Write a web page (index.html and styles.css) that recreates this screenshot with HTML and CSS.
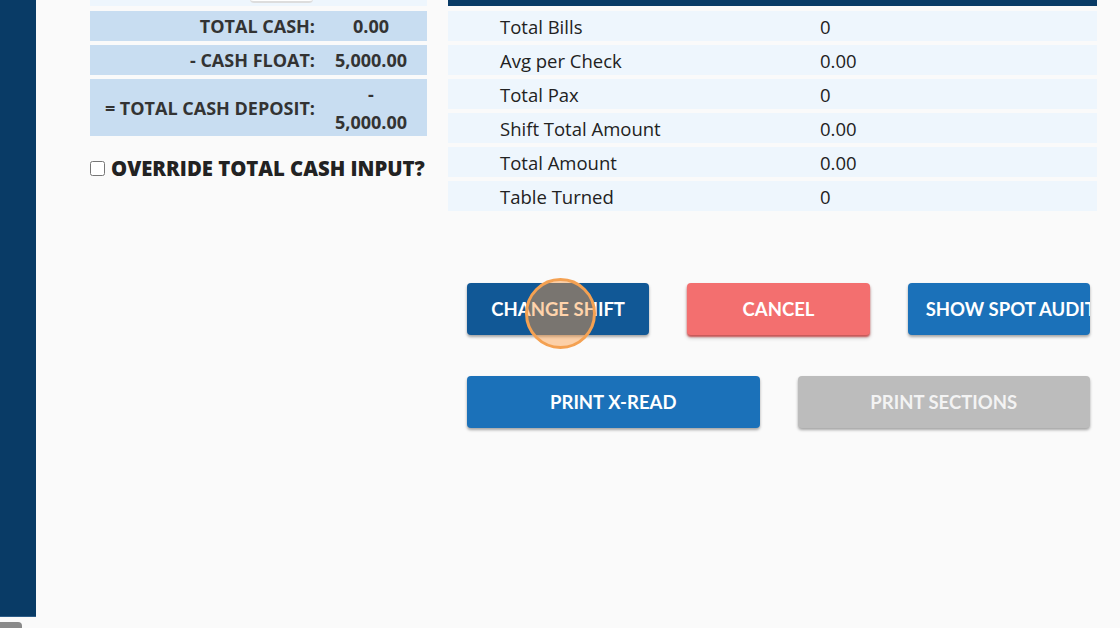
FILE: index.html
```
<!DOCTYPE html>
<html lang="en">
<head>
    <meta charset="UTF-8">
    <title>End Shift</title>
    <link rel="stylesheet" href="styles.css">
</head>
<body>
    <div class="app">
        <div class="sidebar"></div>

        <div class="main">
            <div class="cash-col">
                <div class="cash-row cash-row-input">
                    <span class="cash-input"></span>
                </div>
                <div class="cash-row">
                    <span class="cash-label">TOTAL CASH:</span>
                    <span class="cash-value">0.00</span>
                </div>
                <div class="cash-row">
                    <span class="cash-label">- CASH FLOAT:</span>
                    <span class="cash-value">5,000.00</span>
                </div>
                <div class="cash-row cash-row-tall">
                    <span class="cash-label">= TOTAL CASH DEPOSIT:</span>
                    <span class="cash-value">-<br>5,000.00</span>
                </div>

                <label class="override">
                    <input type="checkbox">
                    <span>OVERRIDE TOTAL CASH INPUT?</span>
                </label>
            </div>

            <div class="summary-col">
                <div class="summary-head"></div>
                <div class="summary-row"><span>Total Bills</span><span>0</span></div>
                <div class="summary-row"><span>Avg per Check</span><span>0.00</span></div>
                <div class="summary-row"><span>Total Pax</span><span>0</span></div>
                <div class="summary-row"><span>Shift Total Amount</span><span>0.00</span></div>
                <div class="summary-row"><span>Total Amount</span><span>0.00</span></div>
                <div class="summary-row"><span>Table Turned</span><span>0</span></div>

                <div class="actions">
                    <div class="btn-row">
                        <button class="btn btn-dark">CHANGE SHIFT<span class="tap"></span></button>
                        <button class="btn btn-red">CANCEL</button>
                        <button class="btn btn-blue btn-clip">SHOW SPOT AUDIT</button>
                    </div>
                    <div class="btn-row">
                        <button class="btn btn-blue">PRINT X-READ</button>
                        <button class="btn btn-grey">PRINT SECTIONS</button>
                    </div>
                </div>
            </div>
        </div>
    </div>
    <div class="bottom-strip"><span class="pill"></span></div>
</body>
</html>
```

FILE: styles.css
```
body {
    margin: 0;
    background-color: #fafafa;
    font-family: "Open Sans", "Liberation Sans", sans-serif;
    color: #2b2b2b;
    overflow: hidden;
}
.app {
    display: flex;
    height: 617px;
}
.sidebar {
    width: 36px;
    flex-shrink: 0;
    background-color: #093b66;
    border-bottom: 1px solid #2d5d88;
}
.main {
    display: flex;
    gap: 21px;
    padding-left: 54px;
}

/* cash column */
.cash-col {
    width: 337px;
    margin-top: -24px;
}
.cash-row {
    display: flex;
    align-items: center;
    height: 30px;
    margin-bottom: 4px;
    background-color: #c8ddf1;
    font-size: 18px;
    font-weight: 700;
    color: #333;
}
.cash-row-input {
    background-color: #eef6fd;
    position: relative;
    margin-bottom: 5px;
}
.cash-input {
    position: absolute;
    left: 160px;
    bottom: 3px;
    width: 63px;
    height: 20px;
    background: #fff;
    border-bottom: 2px solid #ddd;
    border-radius: 4px;
}
.cash-row-tall {
    height: 57px;
}
.cash-label {
    width: 225px;
    text-align: right;
}
.cash-value {
    flex: 1;
    text-align: center;
    line-height: 28px;
}
.override {
    display: flex;
    align-items: center;
    margin-top: 18px;
    font-size: 20.3px;
    font-weight: 800;
    color: #222;
}
.override input {
    width: 15px;
    height: 15px;
    margin: 0 6px 0 0;
}

/* summary column */
.summary-col {
    width: 649px;
}
.summary-head {
    height: 6px;
    background-color: #093b66;
    margin-bottom: 5px;
}
.summary-row {
    display: grid;
    grid-template-columns: 320px 1fr;
    align-items: center;
    height: 30px;
    margin-bottom: 4px;
    padding-left: 52px;
    background-color: #eef6fd;
    font-size: 18.5px;
    color: #222;
}

.actions {
    width: 623px;
    margin: 72px 0 0 19px;
}
.btn-row {
    display: flex;
    gap: 38px;
    margin-bottom: 41px;
}
.btn {
    position: relative;
    flex: 1;
    min-width: 0;
    height: 52px;
    padding: 0 18px;
    border: none;
    border-radius: 4px;
    font-family: Lato, "Liberation Sans", sans-serif;
    font-size: 18.5px;
    font-weight: 700;
    color: #fff;
    white-space: nowrap;
    overflow: hidden;
    text-align: center;
    box-shadow: 0 2px 3px rgba(0, 0, 0, 0.35);
    cursor: pointer;
}
.btn-dark {
    background-color: #115896;
    overflow: visible;
}
.btn-red {
    background-color: #f36f6f;
    box-shadow: 0 2px 2px #c85454, 0 3px 4px rgba(0, 0, 0, 0.2);
}
.btn-blue {
    background-color: #1b71b9;
}
.btn-clip {
    text-align: left;
}
.btn-grey {
    background-color: #bcbcbc;
    color: #f3f3f3;
}
.tap {
    position: absolute;
    left: 58px;
    top: -5px;
    width: 65px;
    height: 65px;
    border: 3px solid #f4a152;
    border-radius: 50%;
    background-color: rgba(255, 154, 63, 0.44);
}

.bottom-strip {
    height: 11px;
    position: relative;
}
.pill {
    position: absolute;
    left: -8px;
    top: 5px;
    width: 30px;
    height: 12px;
    border-radius: 4px;
    background-color: #8a8a8a;
}
```
